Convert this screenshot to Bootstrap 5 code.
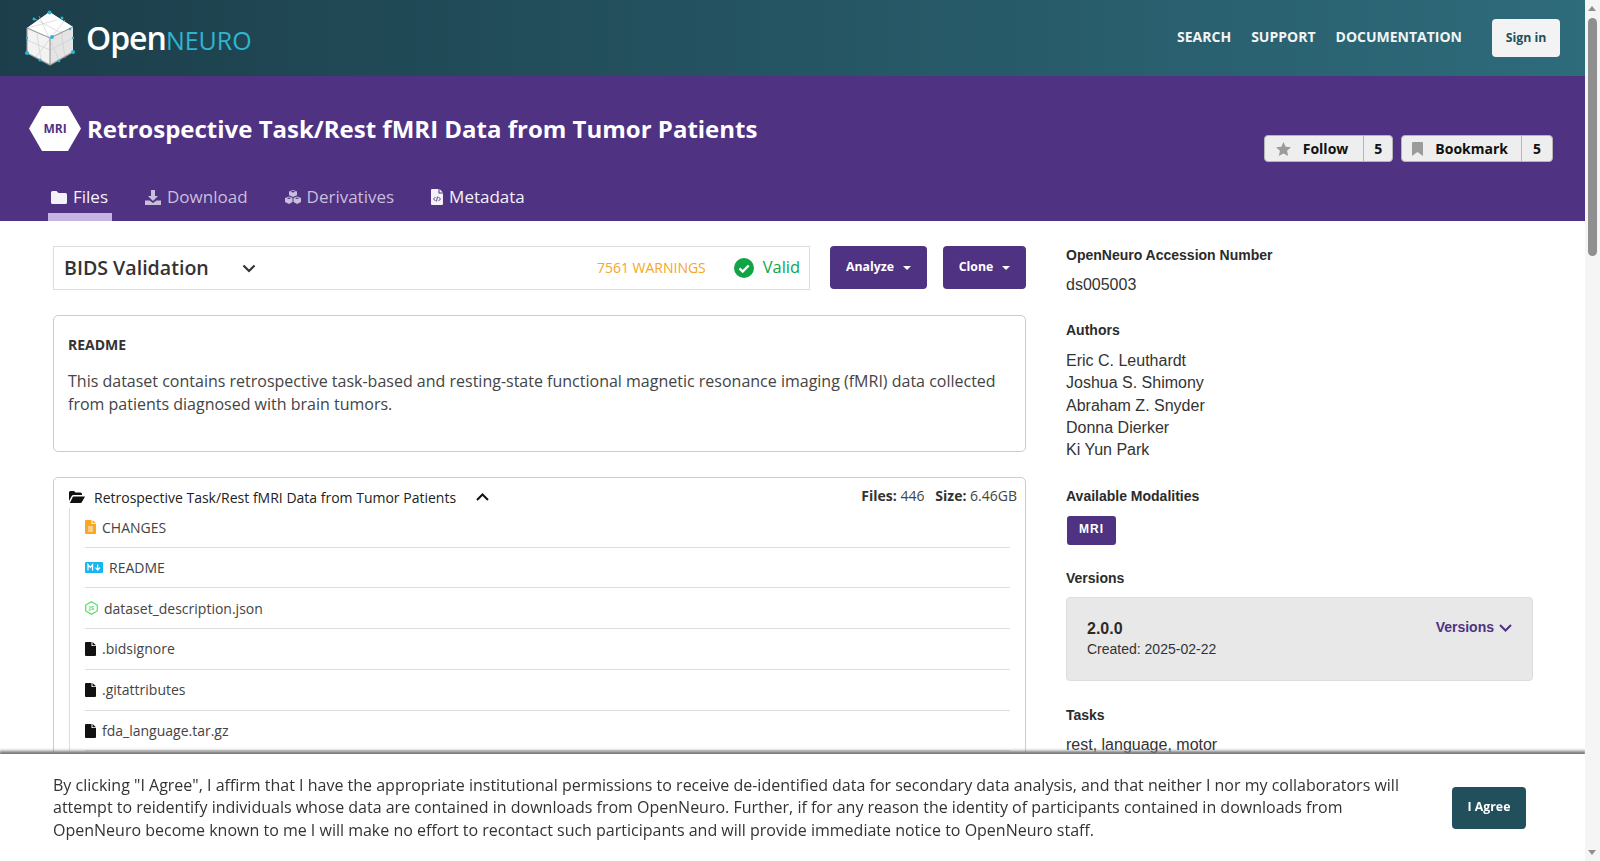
<!DOCTYPE html>
<html lang="en">
  <head>
    <meta charset="UTF-8" />
    <meta name="viewport" content="width=device-width, initial-scale=1.0" />
    <title>OpenNeuro</title>
    <link href="https://cdn.jsdelivr.net/npm/bootstrap@5.3.0/dist/css/bootstrap.min.css" rel="stylesheet" />
    <script src="https://cdn.jsdelivr.net/npm/bootstrap@5.3.0/dist/js/bootstrap.bundle.min.js"></script>
    <style>
      html, body { height: 100%; overflow: hidden; }
      body { font-family: "Open Sans", sans-serif; color: #333; background: #fff; }
      .page-wrap { width: 1585px; height: 861px; overflow: hidden; }

      /* top bar */
      .site-head { height: 76px; padding: 0 25px 0 25px; background: linear-gradient(90deg, #1c3e4a 0%, #2e6b7b 100%); }
      .logo-name { font-size: 32px; font-weight: 600; color: #fff; margin-left: 11px; letter-spacing: -1px; line-height: 1; }
      .logo-name span { font-size: 25px; font-weight: 400; color: #2fb4cf; letter-spacing: 0; }
      .head-link { color: #f2f4f5; font-size: 14px; font-weight: 700; text-transform: uppercase; text-decoration: none; margin: 0 20px 4px 0; }
      .sign-btn { width: 68px; height: 38px; margin-left: 10px; padding: 0; background: #f3f3f3; color: #214f5c; border: 0; font-size: 12.3px; font-weight: 700; border-radius: 4px; }

      /* dataset band */
      .ds-band { height: 145px; background: #4f3281; position: relative; padding: 30px 32px 0 29px; }
      .hex-tag { width: 52px; height: 45px; background: #fff; color: #4f3281; font-size: 12px; font-weight: 700; clip-path: polygon(25% 0, 75% 0, 100% 50%, 75% 100%, 25% 100%, 0 50%); }
      .ds-title { font-size: 24px; font-weight: 700; color: #fff; margin: 0 0 0 6px; line-height: 45px; }
      .count-group { position: absolute; top: 59px; right: 32px; }
      .count-btn { height: 27px; background: #eee; border: 1px solid #b5b5b5; border-radius: 4px; color: #111; font-size: 14px; font-weight: 700; }
      .count-btn .lbl { padding: 0 15px 0 11px; gap: 12px; height: 100%; }
      .count-btn .num { padding: 0 10px; height: 100%; border-left: 1px solid #b5b5b5; }
      .count-btn.mark-btn .lbl { padding: 0 13px 0 10px; }
      .count-btn.mark-btn .num { padding: 0 11px; }
      .ds-tabs { position: absolute; left: 48px; bottom: 0; gap: 30px; }
      .ds-tab { height: 48px; padding: 0 4px 0 3px; font-size: 17px; color: #c9bedb; text-decoration: none; gap: 6px; }
      .ds-tab.tab-on { color: #f4f1f8; border-bottom: 8px solid #c6b5e2; }
      .ds-tab.tab-on span, .ds-tab.tab-on svg { margin-top: 8px; }
      .ds-tab.tab-meta { color: #f4f1f8; }

      /* content */
      .main-wrap { padding: 25px 0 0 53px; gap: 40px; }
      .left-col { width: 973px; flex: none; }
      .right-col { width: 467px; flex: none; font-family: "Liberation Sans", Arial, sans-serif; color: #333; }
      .bids-box { width: 757px; height: 44px; border: 1px solid #ddd; padding: 0 9px 0 10px; }
      .bids-name { font-size: 19.6px; font-weight: 600; color: #333; margin-bottom: 1px; }
      .bids-chev { margin-left: 33px; }
      .warn-txt { font-size: 14px; font-weight: 400; color: #f5a623; margin: 0 28px 1px auto; }
      .valid-txt { font-size: 16.4px; font-weight: 400; color: #0fa544; margin: 0 0 1px 9px; }
      .drop-btn { height: 43px; background: #4f3281; color: #fff; border: 0; border-radius: 4px; font-size: 12.3px; font-weight: 700; gap: 8px; }
      .btn-analyze { width: 97px; margin-left: auto; }
      .btn-clone { width: 83px; margin-left: 16px; }
      .caret-mark { width: 0; height: 0; border-left: 4px solid transparent; border-right: 4px solid transparent; border-top: 4px solid #fff; margin-left: 1px; }
      .readme-box { height: 137px; margin-top: 25px; border: 1px solid #ccc; border-radius: 5px; padding: 19px 14px; }
      .readme-box h2 { font-size: 14px; font-weight: 700; margin: 0 0 16px; line-height: 19px; color: #333; }
      .readme-box p { font-size: 16px; line-height: 23px; margin: 0; color: #444; }
      .tree-box { margin-top: 25px; border: 1px solid #ccc; border-radius: 5px; padding: 0 15px 0 15px; min-height: 400px; }
      .tree-top { height: 30px; padding-top: 8px; font-size: 14px; color: #222; position: relative; }
      .tree-name { margin: 0 20px 0 9px; }
      .tree-stat { position: absolute; right: -7px; top: 7px; font-size: 14px; color: #444; }
      .tree-stat b { color: #333; font-weight: 700; }
      .tree-list { border-left: 1px solid #ddd; padding-left: 15px; margin: 0; list-style: none; font-size: 14px; color: #444; }
      .tree-list li { height: 40.8px; border-bottom: 1px solid #ddd; gap: 6px; }
      .tree-list li:first-child { height: 39.5px; }
      .json-mark { font-family: "Open Sans", sans-serif; font-size: 6px; font-weight: 700; fill: #57d966; }

      /* right column */
      .meta-label { font-size: 14px; font-weight: 700; color: #2b2b2b; margin: 0 0 11px; line-height: 18px; }
      .meta-text { font-size: 16px; line-height: 22.2px; color: #333; margin: 0 0 26px; }
      .meta-text.acc-no { margin: -1px 0 25px; }
      .meta-text.task-list { margin-top: -1px; }
      .mod-tag { display: inline-block; width: 49px; height: 28.500px; margin: 0 0 24.500px 1px; background: #4f3281; color: #fff; font-size: 12px; font-weight: 700; letter-spacing: 1px; line-height: 27px; text-align: center; border-radius: 3px; }
      .ver-box { height: 84px; background: #e8e8e8; border: 1px solid #ddd; border-radius: 4px; padding: 21px 20px 0 20px; margin: -1px 0 25px; position: relative; }
      .ver-num { font-size: 16px; font-weight: 700; line-height: 20px; color: #2b2b2b; }
      .ver-date { font-size: 14px; line-height: 20px; color: #333; }
      .ver-link { position: absolute; right: 20px; top: 19px; font-size: 14px; font-weight: 700; color: #4f3281; text-decoration: none; gap: 5px; }

      /* consent bar */
      .agree-bar { position: fixed; left: 0; bottom: 0; width: 1585px; height: 107px; background: #fff; box-shadow: 0 -2px 3px 1px #777; padding: 0 59px 0 53px; }
      .agree-bar p { width: 1352px; font-size: 16px; line-height: 22.4px; color: #333; margin: 0; }
      .agree-btn { width: 74px; height: 42px; padding: 0; background: #214f5c; color: #fff; border: 0; border-radius: 4px; font-size: 12.3px; font-weight: 700; }

      /* painted scrollbar */
      .fake-scroll { position: fixed; top: 0; right: 0; width: 15px; height: 861px; background: #f5f5f5; }
      .fake-thumb { position: absolute; left: 3px; top: 18px; width: 9px; height: 238px; border-radius: 5px; background: #8f8f8f; }
      .fake-up, .fake-down { position: absolute; left: 3px; width: 0; height: 0; border-left: 4.5px solid transparent; border-right: 4.5px solid transparent; }
      .fake-up { top: 6px; border-bottom: 5px solid #8f8f8f; }
      .fake-down { bottom: 6px; border-top: 5px solid #8f8f8f; }
    </style>
  </head>
  <body>
    <div class="page-wrap">
      <header class="site-head d-flex align-items-center">
        <svg width="50" height="56" viewBox="0 0 50 56" fill="none">
          <path d="M24.500 2 48 17v25L25 55 2 43V18z" fill="#f3f3f3" />
          <path d="M25 28 48 17v25L25 55z" fill="#e4e4e4" />
          <path d="M2 18 25 28 48 17 24.500 2z" fill="#fff" />
          <path d="M8 8 38 24M14 6l20 44M40 10 10 48M2 30l23 10 23-12M12 24l4 26M36 20l4 28M2 18l30-8" stroke="#c9c9c9" stroke-width=".6" />
          <path d="M2 18 25 28 48 17M25 28v27M2 18v25l23 12 23-13" stroke="#9a9a9a" stroke-width="1.100" />
          <g fill="#29b6d3">
            <circle cx="24.500" cy="2.500" r="2" />
            <circle cx="9" cy="9" r="1.500" />
            <circle cx="37" cy="8" r="1.500" />
            <circle cx="27" cy="27" r="2" />
            <circle cx="45" cy="19" r="1.200" />
            <circle cx="2" cy="28" r="1.200" />
            <circle cx="48" cy="28" r="1.200" />
            <circle cx="2" cy="43" r="2" />
            <circle cx="48" cy="42" r="2" />
            <circle cx="15" cy="50" r="1.500" />
            <circle cx="34" cy="51" r="1.300" />
          </g>
        </svg>
        <div class="logo-name">Open<span>NEURO</span></div>
        <nav class="ms-auto d-flex align-items-center">
          <a class="head-link" href="#">Search</a>
          <a class="head-link" href="#">Support</a>
          <a class="head-link" href="#">Documentation</a>
          <button class="sign-btn" type="button">Sign in</button>
        </nav>
      </header>

      <section class="ds-band">
        <div class="d-flex align-items-center">
          <div class="hex-tag d-flex align-items-center justify-content-center">MRI</div>
          <h1 class="ds-title">Retrospective Task/Rest fMRI Data from Tumor Patients</h1>
        </div>
        <div class="count-group d-flex gap-2">
          <div class="count-btn d-flex align-items-center">
            <div class="lbl d-flex align-items-center">
              <svg width="15" height="14" viewBox="0 0 16 15"><path d="m8 0 2.300 5 5.700.6-4.200 3.800 1.200 5.600L8 12.200 3 15l1.200-5.600L0 5.600 5.700 5z" fill="#9b9b9b" /></svg>
              <span>Follow</span>
            </div>
            <div class="num d-flex align-items-center">5</div>
          </div>
          <div class="count-btn mark-btn d-flex align-items-center">
            <div class="lbl d-flex align-items-center">
              <svg width="11" height="14" viewBox="0 0 11 14"><path d="M1 0h9a1 1 0 0 1 1 1v13L5.500 10 0 14V1a1 1 0 0 1 1-1z" fill="#9b9b9b" /></svg>
              <span>Bookmark</span>
            </div>
            <div class="num d-flex align-items-center">5</div>
          </div>
        </div>
        <div class="ds-tabs d-flex align-items-center">
          <a class="ds-tab tab-on d-flex align-items-center" href="#">
            <svg width="16" height="13" viewBox="0 0 16 13"><path d="M1.500 0h4l2 2h7A1.500 1.500 0 0 1 16 3.500v8a1.500 1.500 0 0 1-1.500 1.500h-13A1.500 1.500 0 0 1 0 11.500v-10A1.500 1.500 0 0 1 1.500 0z" fill="#f4f1f8" /></svg>
            <span>Files</span>
          </a>
          <a class="ds-tab d-flex align-items-center" href="#">
            <svg width="16" height="15" viewBox="0 0 16 15"><path d="M6 0h4v6h3l-5 5-5-5h3zM0 10.500h4.500L8 13l3.500-2.500H16V15H0z" fill="#c9bedb" /></svg>
            <span>Download</span>
          </a>
          <a class="ds-tab d-flex align-items-center" href="#">
            <svg width="16" height="14" viewBox="0 0 16 14" fill="#c9bedb"><path d="m8 0 4 1.500v3.800L8 7 4 5.300V1.500z" /><path d="m4 6.500 3.500 1.500v4L4 14 0 12V8z" /><path d="m12 6.500 4 1.500v4l-4 2-3.500-2V8z" /><path d="M8 2.500 5.500 1.700 8 .8l2.500.9zM4 9 1.800 8.200 4 7.400l2 .8zM12 9l-2-.8 2-.8 2.200.8z" fill="#4f3281" /></svg>
            <span>Derivatives</span>
          </a>
          <a class="ds-tab tab-meta d-flex align-items-center" href="#">
            <svg width="12" height="16" viewBox="0 0 12 16"><path d="M1 0h6.500v4.500H12V15a1 1 0 0 1-1 1H1a1 1 0 0 1-1-1V1a1 1 0 0 1 1-1zM8.500 0 12 3.500H8.500z" fill="#f4f1f8" /><path d="M4.500 8 2.500 10l2 2M7.500 8l2 2-2 2M6.600 7.500l-1.200 5" fill="none" stroke="#4f3281" stroke-width=".9" /></svg>
            <span>Metadata</span>
          </a>
        </div>
      </section>

      <main class="main-wrap d-flex">
        <div class="left-col">
          <div class="d-flex align-items-start">
            <div class="bids-box d-flex align-items-center">
              <span class="bids-name">BIDS Validation</span>
              <svg class="bids-chev" width="14" height="9" viewBox="0 0 14 9"><path d="M1.500 1.500 7 7l5.500-5.500" fill="none" stroke="#333" stroke-width="2.200" /></svg>
              <span class="warn-txt">7561 WARNINGS</span>
              <svg width="20" height="20" viewBox="0 0 20 20"><circle cx="10" cy="10" r="10" fill="#0fa544" /><path d="m5.500 10.300 3.200 3.200 6-6" fill="none" stroke="#fff" stroke-width="2.400" /></svg>
              <span class="valid-txt">Valid</span>
            </div>
            <button class="drop-btn btn-analyze d-flex align-items-center justify-content-center" type="button">Analyze <i class="caret-mark"></i></button>
            <button class="drop-btn btn-clone d-flex align-items-center justify-content-center" type="button">Clone <i class="caret-mark"></i></button>
          </div>

          <div class="readme-box">
            <h2>README</h2>
            <p>This dataset contains retrospective task-based and resting-state functional magnetic resonance imaging (fMRI) data collected from patients diagnosed with brain tumors.</p>
          </div>

          <div class="tree-box">
            <div class="tree-top d-flex align-items-center">
              <svg width="16" height="12" viewBox="0 0 16 12"><path d="M0 10V1.500A1.500 1.500 0 0 1 1.500 0h3.500l1.500 1.500h5A1.500 1.500 0 0 1 13 3v1H4.500a2 2 0 0 0-1.800 1.100zM.8 12h10.700a1.500 1.500 0 0 0 1.300-.7L16 5.500H4.700a1 1 0 0 0-.9.5z" fill="#111" /></svg>
              <span class="tree-name">Retrospective Task/Rest fMRI Data from Tumor Patients</span>
              <svg width="13" height="8" viewBox="0 0 13 8"><path d="M1 7 6.500 1.500 12 7" fill="none" stroke="#111" stroke-width="2" /></svg>
              <div class="tree-stat"><b>Files:</b> 446 &nbsp;&nbsp;<b>Size:</b> 6.46GB</div>
            </div>
            <ul class="tree-list">
              <li class="d-flex align-items-center">
                <svg width="11" height="14" viewBox="0 0 11 14"><path d="M1 0h5.500v4H11v9a1 1 0 0 1-1 1H1a1 1 0 0 1-1-1V1a1 1 0 0 1 1-1zM7.500 0 11 3.200H7.500z" fill="#f9a825" /><path d="M3 7h5M3 9h5M3 11h5" stroke="#fff" stroke-width=".9" /></svg>
                <span>CHANGES</span>
              </li>
              <li class="d-flex align-items-center">
                <svg width="18" height="11" viewBox="0 0 18 11"><rect width="18" height="11" rx="1" fill="#17b5f2" /><path d="M3 8.500v-6l2.300 3 2.300-3v6M12.700 2.500v5M10.500 5.600l2.200 2.400 2.200-2.400" fill="none" stroke="#fff" stroke-width="1.200" /></svg>
                <span>README</span>
              </li>
              <li class="d-flex align-items-center">
                <svg width="13" height="14" viewBox="0 0 13 14"><path d="M6.500.7 12.300 4v6l-5.800 3.300L.7 10V4z" fill="none" stroke="#57d966" stroke-width="1.200" /><text class="json-mark" x="6.500" y="9.300" text-anchor="middle">JS</text></svg>
                <span>dataset_description.json</span>
              </li>
              <li class="d-flex align-items-center">
                <svg width="11" height="14" viewBox="0 0 11 14"><path d="M1 0h5.500v4H11v9a1 1 0 0 1-1 1H1a1 1 0 0 1-1-1V1a1 1 0 0 1 1-1zM7.500 0 11 3.200H7.500z" fill="#111" /></svg>
                <span>.bidsignore</span>
              </li>
              <li class="d-flex align-items-center">
                <svg width="11" height="14" viewBox="0 0 11 14"><path d="M1 0h5.500v4H11v9a1 1 0 0 1-1 1H1a1 1 0 0 1-1-1V1a1 1 0 0 1 1-1zM7.500 0 11 3.200H7.500z" fill="#111" /></svg>
                <span>.gitattributes</span>
              </li>
              <li class="d-flex align-items-center">
                <svg width="11" height="14" viewBox="0 0 11 14"><path d="M1 0h5.500v4H11v9a1 1 0 0 1-1 1H1a1 1 0 0 1-1-1V1a1 1 0 0 1 1-1zM7.500 0 11 3.200H7.500z" fill="#111" /></svg>
                <span>fda_language.tar.gz</span>
              </li>
            </ul>
          </div>
        </div>

        <aside class="right-col">
          <h3 class="meta-label">OpenNeuro Accession Number</h3>
          <p class="meta-text acc-no">ds005003</p>
          <h3 class="meta-label">Authors</h3>
          <p class="meta-text">Eric C. Leuthardt<br />Joshua S. Shimony<br />Abraham Z. Snyder<br />Donna Dierker<br />Ki Yun Park</p>
          <h3 class="meta-label">Available Modalities</h3>
          <span class="mod-tag">MRI</span>
          <h3 class="meta-label">Versions</h3>
          <div class="ver-box">
            <div class="ver-num">2.0.0</div>
            <div class="ver-date">Created: 2025-02-22</div>
            <a class="ver-link d-flex align-items-center" href="#">Versions
              <svg width="13" height="8" viewBox="0 0 13 8"><path d="M1 1l5.500 5.500L12 1" fill="none" stroke="#4f3281" stroke-width="2" /></svg>
            </a>
          </div>
          <h3 class="meta-label">Tasks</h3>
          <p class="meta-text task-list">rest, language, motor</p>
        </aside>
      </main>
    </div>

    <div class="agree-bar d-flex align-items-center justify-content-between">
      <p>By clicking "I Agree", I affirm that I have the appropriate institutional permissions to receive de-identified data for secondary data analysis, and that neither I nor my collaborators will attempt to reidentify individuals whose data are contained in downloads from OpenNeuro. Further, if for any reason the identity of participants contained in downloads from OpenNeuro become known to me I will make no effort to recontact such participants and will provide immediate notice to OpenNeuro staff.</p>
      <button class="agree-btn" type="button">I Agree</button>
    </div>

    <div class="fake-scroll">
      <i class="fake-up"></i>
      <i class="fake-thumb"></i>
      <i class="fake-down"></i>
    </div>
  </body>
</html>
